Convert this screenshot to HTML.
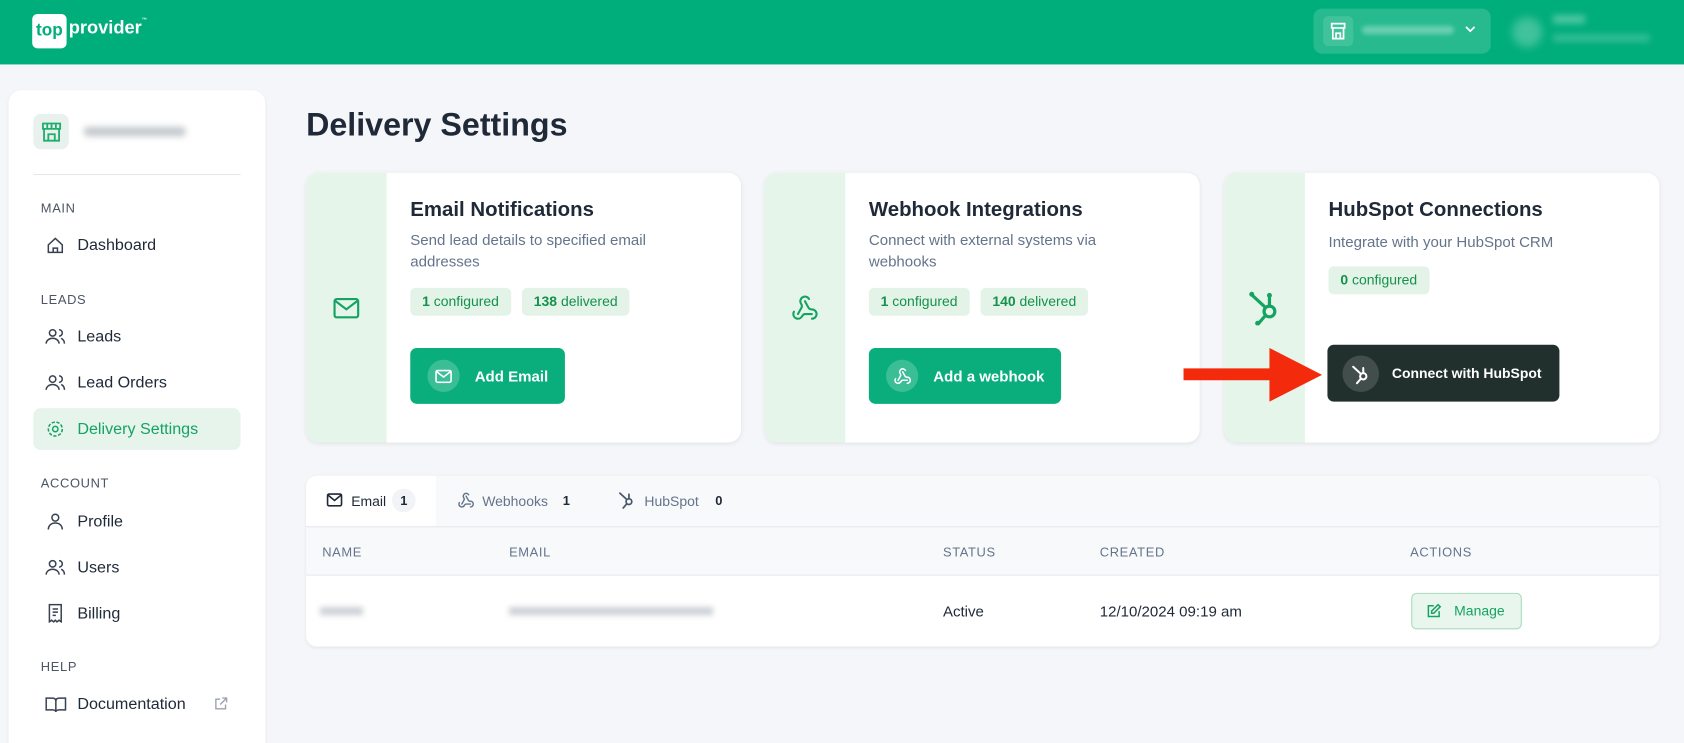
<!DOCTYPE html>
<html style="overflow:hidden;width:1684px;height:743px"><head><style>
*{box-sizing:border-box;margin:0;padding:0}
body{width:1684px;height:743px;overflow:hidden;background:#f5f6f9;font-family:"Liberation Sans",sans-serif;color:#1f2937;position:relative}
#w{position:absolute;left:0;top:0;width:1568px;height:692px;overflow:hidden;transform:scale(1.07398);transform-origin:0 0}
.a{position:absolute}
.hdr{left:0;top:0;width:1568px;height:60px;background:#00ae7b}
.side{left:8px;top:84px;width:239px;height:640px;background:#fff;border-radius:12px;box-shadow:0 1px 3px rgba(0,0,0,.06)}
.sec{font-size:12px;color:#4b5563;letter-spacing:.6px}
.nav{font-size:15px;color:#1f2937}
.card{background:#fff;border-radius:12px;box-shadow:0 1px 4px rgba(0,0,0,.08);overflow:hidden;height:251px;top:161px;width:405px}
.strip{left:0;top:0;width:75px;height:100%;background:#e5f5ea}
.ct{font-size:19px;font-weight:bold;color:#1f2937}
.cd{font-size:14px;color:#64748b;line-height:20px}
.pill{background:#e3f3e8;color:#14924b;font-size:13px;border-radius:5px;height:26px;line-height:26px;padding:0 11px}
.btn{background:#0aae7c;color:#fff;font-weight:bold;font-size:14px;border-radius:6px;height:52px;display:flex;align-items:center;padding:0 16px;white-space:nowrap}
.bic{width:30px;height:30px;border-radius:50%;background:rgba(255,255,255,.2);margin-right:14px;display:flex;align-items:center;justify-content:center;flex:none}
.th{font-size:12px;color:#64748b;letter-spacing:.6px;top:507px}
</style></head><body><div id="w">
<div class="a hdr"></div>
<div class="a" style="left:30px;top:13px;width:32px;height:32px;background:#fff;border-radius:5px;color:#00ae7b;font-weight:bold;font-size:16px;line-height:32px;text-align:center">top</div>
<div class="a" style="left:64px;top:16px;color:#fff;font-weight:bold;font-size:17px">provider<span style="font-size:5px;vertical-align:top">™</span></div>
<div class="a" style="left:1223px;top:8px;width:165px;height:42px;background:rgba(255,255,255,.15);border-radius:8px"></div>
<div class="a" style="left:1232px;top:15px;width:28px;height:28px;background:rgba(255,255,255,.12);border-radius:5px"></div>
<svg class="a" style="left:1238px;top:20px" width="16" height="18" viewBox="0 0 16 18" fill="none" stroke="#fff" stroke-width="1.6"><path d="M2 2h12v4H2zM3 6v10h10V6M6 16v-5h4v5"/></svg>
<div class="a" style="left:1268px;top:24px;width:86px;height:8px;background:rgba(255,255,255,.3);border-radius:4px;filter:blur(2px)"></div>
<svg class="a" style="left:1364px;top:23px" width="10" height="8" viewBox="0 0 10 8" fill="none" stroke="#fff" stroke-width="1.6"><path d="M1 2l4 4 4-4"/></svg>
<div class="a" style="left:1408px;top:16px;width:28px;height:28px;background:rgba(255,255,255,.25);border-radius:50%;filter:blur(4px)"></div>
<div class="a" style="left:1446px;top:14px;width:30px;height:8px;background:rgba(255,255,255,.3);filter:blur(3px)"></div>
<div class="a" style="left:1446px;top:32px;width:90px;height:7px;background:rgba(255,255,255,.2);filter:blur(3px)"></div>

<div class="a side"></div>
<div class="a" style="left:31px;top:106px;width:33px;height:33px;background:#e8f1ed;border-radius:7px"></div>
<svg class="a" style="left:38px;top:113px" width="20" height="20" viewBox="0 0 20 20" fill="none" stroke="#1fae6c" stroke-width="1.7"><path d="M2 2h16v5H2zM3 7v11h14V7M7 18v-6h6v6M6 2v5M10 2v5M14 2v5"/></svg>
<div class="a" style="left:78px;top:118px;width:95px;height:9px;background:#c5c9ce;border-radius:4px;filter:blur(3px)"></div>
<div class="a" style="left:31px;top:162px;width:193px;height:1px;background:#e5e7eb"></div>
<div class="a sec" style="left:38px;top:187px">MAIN</div>
<div class="a nav" style="left:72px;top:220px">Dashboard</div>
<svg class="a" style="left:43px;top:220px" width="17" height="17" viewBox="0 0 17 17" fill="none" stroke="#374151" stroke-width="1.4"><path d="M2 8L8.5 2 15 8v7H2zM6.5 15v-4h4v4"/></svg>
<div class="a sec" style="left:38px;top:272px">LEADS</div>
<div class="a nav" style="left:72px;top:305px">Leads</div>
<div class="a nav" style="left:72px;top:348px">Lead Orders</div>
<svg class="a" style="left:42px;top:305px" width="20" height="17" viewBox="0 0 20 17" fill="none" stroke="#374151" stroke-width="1.4"><circle cx="7" cy="5" r="3"/><path d="M1 15c0-3 3-5 6-5s6 2 6 5M13 2a3 3 0 010 6M15 10c2 1 3 3 3 5"/></svg>
<svg class="a" style="left:42px;top:348px" width="20" height="17" viewBox="0 0 20 17" fill="none" stroke="#374151" stroke-width="1.4"><circle cx="7" cy="5" r="3"/><path d="M1 15c0-3 3-5 6-5s6 2 6 5M13 2a3 3 0 010 6M15 10c2 1 3 3 3 5"/></svg>
<div class="a" style="left:31px;top:380px;width:193px;height:39px;background:#e6f4ec;border-radius:7px"></div>
<svg class="a" style="left:43px;top:391px" width="17" height="17" viewBox="0 0 17 17" fill="none" stroke="#15a362" stroke-width="1.4"><circle cx="8.5" cy="8.5" r="2.5"/><circle cx="8.5" cy="8.5" r="6.5" stroke-dasharray="3 1.5"/></svg>
<div class="a nav" style="left:72px;top:391px;color:#15a362">Delivery Settings</div>
<div class="a sec" style="left:38px;top:443px">ACCOUNT</div>
<div class="a nav" style="left:72px;top:477px">Profile</div>
<div class="a nav" style="left:72px;top:520px">Users</div>
<div class="a nav" style="left:72px;top:563px">Billing</div>
<svg class="a" style="left:43px;top:477px" width="17" height="17" viewBox="0 0 17 17" fill="none" stroke="#374151" stroke-width="1.4"><circle cx="8.5" cy="5" r="3.2"/><path d="M2 16c0-4 3-6 6.5-6s6.5 2 6.5 6"/></svg>
<svg class="a" style="left:42px;top:520px" width="20" height="17" viewBox="0 0 20 17" fill="none" stroke="#374151" stroke-width="1.4"><circle cx="7" cy="5" r="3"/><path d="M1 15c0-3 3-5 6-5s6 2 6 5M13 2a3 3 0 010 6M15 10c2 1 3 3 3 5"/></svg>
<svg class="a" style="left:44px;top:562px" width="15" height="18" viewBox="0 0 15 18" fill="none" stroke="#374151" stroke-width="1.4"><path d="M2 1h11v16l-2-1.5-2 1.5-1.5-1.5L6 17l-2-1.5L2 17zM5 5h5M5 8h5M5 11h3"/></svg>
<div class="a sec" style="left:38px;top:614px">HELP</div>
<div class="a nav" style="left:72px;top:647px">Documentation</div>
<svg class="a" style="left:42px;top:648px" width="20" height="16" viewBox="0 0 20 16" fill="none" stroke="#374151" stroke-width="1.4"><path d="M1 2h6c2 0 3 1 3 3v10c0-1-1-2-3-2H1zM19 2h-6c-2 0-3 1-3 3v10c0-1 1-2 3-2h6z"/></svg>
<svg class="a" style="left:200px;top:649px" width="12" height="12" viewBox="0 0 12 12" fill="none" stroke="#9ca3af" stroke-width="1.3"><path d="M5 2H1v9h9V7M7 1h4v4M11 1L5 7"/></svg>

<div class="a" style="left:285px;top:100px;font-size:30px;font-weight:bold;color:#1f2937">Delivery Settings</div>

<div class="a card" style="left:285px"><div class="a strip"></div>
<svg class="a" style="left:25px;top:116px" width="25" height="20" viewBox="0 0 25 20" fill="none" stroke="#15a362" stroke-width="2"><rect x="1.5" y="1.5" width="22" height="17" rx="2"/><path d="M2 3l10.5 8L23 3"/></svg>
<div class="a ct" style="left:97px;top:24px">Email Notifications</div>
<div class="a cd" style="left:97px;top:52px;width:250px">Send lead details to specified email addresses</div>
<div class="a pill" style="left:97px;top:107px"><b>1</b> configured</div>
<div class="a pill" style="left:201px;top:107px"><b>138</b> delivered</div>
<div class="a btn" style="left:97px;top:163px"><span class="bic"><svg width="16" height="13" viewBox="0 0 16 13" fill="none" stroke="#fff" stroke-width="1.5"><rect x="1" y="1" width="14" height="11" rx="1.5"/><path d="M1.5 2l6.5 5 6.5-5"/></svg></span>Add Email</div>
</div>
<div class="a card" style="left:712px"><div class="a strip"></div>
<svg class="a" style="left:24px;top:113px" width="27" height="26" viewBox="0 0 24 24" fill="none" stroke="#15a362" stroke-width="1.8" stroke-linecap="round"><path d="M18 16.98h-5.99c-1.1 0-1.95.94-2.48 1.9A4 4 0 012 17c.01-.7.2-1.4.57-2M6 17l3.13-5.78c.53-.97.1-2.18-.5-3.1a4 4 0 116.89-4.06M12 6l3.13 5.73C15.66 12.7 16.9 13 18 13a4 4 0 010 8"/></svg>
<div class="a ct" style="left:97px;top:24px">Webhook Integrations</div>
<div class="a cd" style="left:97px;top:52px;width:260px">Connect with external systems via webhooks</div>
<div class="a pill" style="left:97px;top:107px"><b>1</b> configured</div>
<div class="a pill" style="left:201px;top:107px"><b>140</b> delivered</div>
<div class="a btn" style="left:97px;top:163px"><span class="bic"><svg width="17" height="17" viewBox="0 0 24 24" fill="none" stroke="#fff" stroke-width="2" stroke-linecap="round"><path d="M18 16.98h-5.99c-1.1 0-1.95.94-2.48 1.9A4 4 0 012 17c.01-.7.2-1.4.57-2M6 17l3.13-5.78c.53-.97.1-2.18-.5-3.1a4 4 0 116.89-4.06M12 6l3.13 5.73C15.66 12.7 16.9 13 18 13a4 4 0 010 8"/></svg></span>Add a webhook</div>
</div>
<div class="a card" style="left:1140px"><div class="a strip"></div>
<svg class="a" style="left:22px;top:108px" width="32" height="34" viewBox="0 0 32 34" fill="none" stroke="#15a362" stroke-width="3" stroke-linecap="round"><circle cx="20" cy="21" r="5"/><path d="M4 6l12 11M20 8v8M16 25l-6 7"/><circle cx="3.5" cy="5" r="2.3" fill="#15a362" stroke="none"/><circle cx="20" cy="6" r="2.3" fill="#15a362" stroke="none"/><circle cx="9" cy="32" r="2.3" fill="#15a362" stroke="none"/></svg>
<div class="a ct" style="left:97px;top:24px">HubSpot Connections</div>
<div class="a cd" style="left:97px;top:54px">Integrate with your HubSpot CRM</div>
<div class="a pill" style="left:97px;top:87px"><b>0</b> configured</div>
<div class="a btn" style="left:96px;top:160px;background:#21302c;height:53px;width:216px;padding-left:14px;font-size:13px"><span class="bic" style="width:34px;height:34px;background:rgba(255,255,255,.15);margin-right:12px"><svg width="20" height="20" viewBox="0 0 32 34" fill="none" stroke="#fff" stroke-width="3.2" stroke-linecap="round"><circle cx="20" cy="21" r="5"/><path d="M4 6l12 11M20 8v8M16 25l-6 7"/></svg></span>Connect with HubSpot</div>
</div>
<svg class="a" style="left:1100px;top:323px" width="132" height="52" viewBox="0 0 132 52"><path d="M2 20h80V1l49 25-49 25V31H2z" fill="#f42a0c"/></svg>

<div class="a" style="left:285px;top:443px;width:1260px;height:159px;background:#f8f9fb;border-radius:10px;box-shadow:0 1px 3px rgba(0,0,0,.07);overflow:hidden">
<div class="a" style="left:0;top:0;width:121px;height:47px;background:#fff"></div>
<div class="a" style="left:0;top:47px;width:1260px;height:1px;background:#e3e7ee"></div>
<div class="a" style="left:0;top:92px;width:1260px;height:67px;background:#fff;border-top:1px solid #e3e7ee"></div>
</div>
<svg class="a" style="left:304px;top:459px" width="15" height="13" viewBox="0 0 15 13" fill="none" stroke="#1f2937" stroke-width="1.5"><rect x="1" y="1" width="13" height="11" rx="1.5"/><path d="M1.5 2l6 5 6-5"/></svg>
<div class="a" style="left:327px;top:459px;font-size:13px;color:#1f2937">Email</div>
<div class="a" style="left:365px;top:455px;width:22px;height:22px;border-radius:50%;background:#f1f3f7;font-size:12px;text-align:center;line-height:22px;font-weight:bold">1</div>
<svg class="a" style="left:426px;top:458px" width="16" height="16" viewBox="0 0 24 24" fill="none" stroke="#64748b" stroke-width="2" stroke-linecap="round"><path d="M18 16.98h-5.99c-1.1 0-1.95.94-2.48 1.9A4 4 0 012 17c.01-.7.2-1.4.57-2M6 17l3.13-5.78c.53-.97.1-2.18-.5-3.1a4 4 0 116.89-4.06M12 6l3.13 5.73C15.66 12.7 16.9 13 18 13a4 4 0 010 8"/></svg>
<div class="a" style="left:449px;top:459px;font-size:13px;color:#64748b">Webhooks</div>
<div class="a" style="left:524px;top:459px;font-size:12px;font-weight:bold">1</div>
<svg class="a" style="left:575px;top:456px" width="17" height="18" viewBox="0 0 32 34" fill="none" stroke="#475569" stroke-width="3" stroke-linecap="round"><circle cx="20" cy="21" r="5"/><path d="M4 6l12 11M20 8v8M16 25l-6 7"/></svg>
<div class="a" style="left:600px;top:459px;font-size:13px;color:#64748b">HubSpot</div>
<div class="a" style="left:666px;top:459px;font-size:12px;font-weight:bold">0</div>
<div class="a th" style="left:300px">NAME</div>
<div class="a th" style="left:474px">EMAIL</div>
<div class="a th" style="left:878px">STATUS</div>
<div class="a th" style="left:1024px">CREATED</div>
<div class="a th" style="left:1313px">ACTIONS</div>
<div class="a" style="left:298px;top:565px;width:40px;height:8px;background:#cfd3d8;filter:blur(2.5px)"></div>
<div class="a" style="left:474px;top:565px;width:190px;height:8px;background:#cfd3d8;filter:blur(2.5px)"></div>
<div class="a" style="left:878px;top:561px;font-size:14px">Active</div>
<div class="a" style="left:1024px;top:561px;font-size:14px">12/10/2024 09:19 am</div>
<div class="a" style="left:1314px;top:552px;width:103px;height:34px;background:#e8f6ed;border:1px solid #a8dcbb;border-radius:5px;color:#15a362;font-size:13px;line-height:32px;padding-left:39px">Manage</div>
<svg class="a" style="left:1329px;top:562px" width="13" height="13" viewBox="0 0 13 13" fill="none" stroke="#15a362" stroke-width="1.4"><path d="M6 2H1v10h10V7M10 1l2 2-6 6H4V7z"/></svg>
</div></body></html>
